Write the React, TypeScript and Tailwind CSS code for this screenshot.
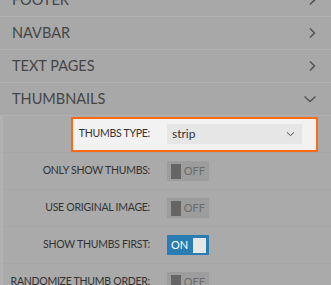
import React from "react";

function ChevronRight() {
  return (
    <svg width="10" height="12" viewBox="0 0 10 12" fill="none">
      <path d="M3 1.5 L7.5 6 L3 10.5" stroke="#555" strokeWidth="1.6" />
    </svg>
  );
}
function ChevronDown({ color = "#555", w = 14 }: { color?: string; w?: number }) {
  return (
    <svg width={w} height="8" viewBox="0 0 14 8" fill="none">
      <path d="M1.5 1.5 L7 6.5 L12.5 1.5" stroke={color} strokeWidth="1.5" />
    </svg>
  );
}

function Header({ label, open }: { label: string; open?: boolean }) {
  return (
    <div className="h-[33px] flex items-center justify-between pl-3 pr-[14px] border-b border-[#b0b0b0] bg-[#a8a8a8]">
      <span className="text-[14.5px] text-[#454545] uppercase">{label}</span>
      {open ? <ChevronDown /> : <ChevronRight />}
    </div>
  );
}

function Toggle({ on }: { on?: boolean }) {
  if (on)
    return (
      <div className="w-[42px] h-[20px] bg-[#2a7db2] flex items-center justify-between px-[3px]">
        <span className="text-[11px] text-white pl-[1px]">ON</span>
        <span className="w-[13px] h-[15px] bg-[#e6e6e6] block" />
      </div>
    );
  return (
    <div className="w-[42px] h-[20px] bg-[#9d9d9d] flex items-center px-[4px] gap-[3px]">
      <span className="w-[13px] h-[15px] bg-[#656565] block" />
      <span className="text-[11px] text-[#6b6b6b]">OFF</span>
    </div>
  );
}

function Row({ label, children }: { label: string; children: React.ReactNode }) {
  return (
    <div className="h-[37px] flex items-center border-b border-[#a6a6a6]">
      <div className="w-[147px] text-right text-[10.5px] tracking-[-0.25px] text-[#333] uppercase whitespace-nowrap">{label}</div>
      <div className="ml-[17px]">{children}</div>
    </div>
  );
}

export default function App() {
  return (
    <div
      className="w-[331px] h-[285px] overflow-hidden bg-[#aaaaaa]"
      style={{ fontFamily: "Lato, 'Open Sans', sans-serif" }}
    >
      <div className="-mt-[16px]">
        <Header label="Footer" />
        <Header label="Navbar" />
        <Header label="Text Pages" />
        <Header label="Thumbnails" open />
        <div className="border-l-[3px] border-[#b1b1b1] bg-[#aaaaaa]">
          <div className="relative h-[37px] flex items-center border-b border-[#a6a6a6]">
            <div className="absolute left-[68px] right-[13px] top-[1px] bottom-0 border-2 border-[#ff6a13] bg-[#f2f2f2]" />
            <div className="relative w-[147px] text-right text-[10.5px] tracking-[-0.25px] text-[#333] uppercase whitespace-nowrap">
              Thumbs Type:
            </div>
            <div className="relative ml-[17px] w-[135px] h-[20px] bg-[#e6e6e6] flex items-center justify-between pl-[5px] pr-[7px]">
              <span className="text-[12px] text-[#333]">strip</span>
              <ChevronDown color="#444" w={9} />
            </div>
          </div>
          <Row label="Only show thumbs:">
            <Toggle />
          </Row>
          <Row label="Use original image:">
            <Toggle />
          </Row>
          <Row label="Show thumbs first:">
            <Toggle on />
          </Row>
          <Row label="Randomize thumb order:">
            <Toggle />
          </Row>
        </div>
      </div>
    </div>
  );
}
